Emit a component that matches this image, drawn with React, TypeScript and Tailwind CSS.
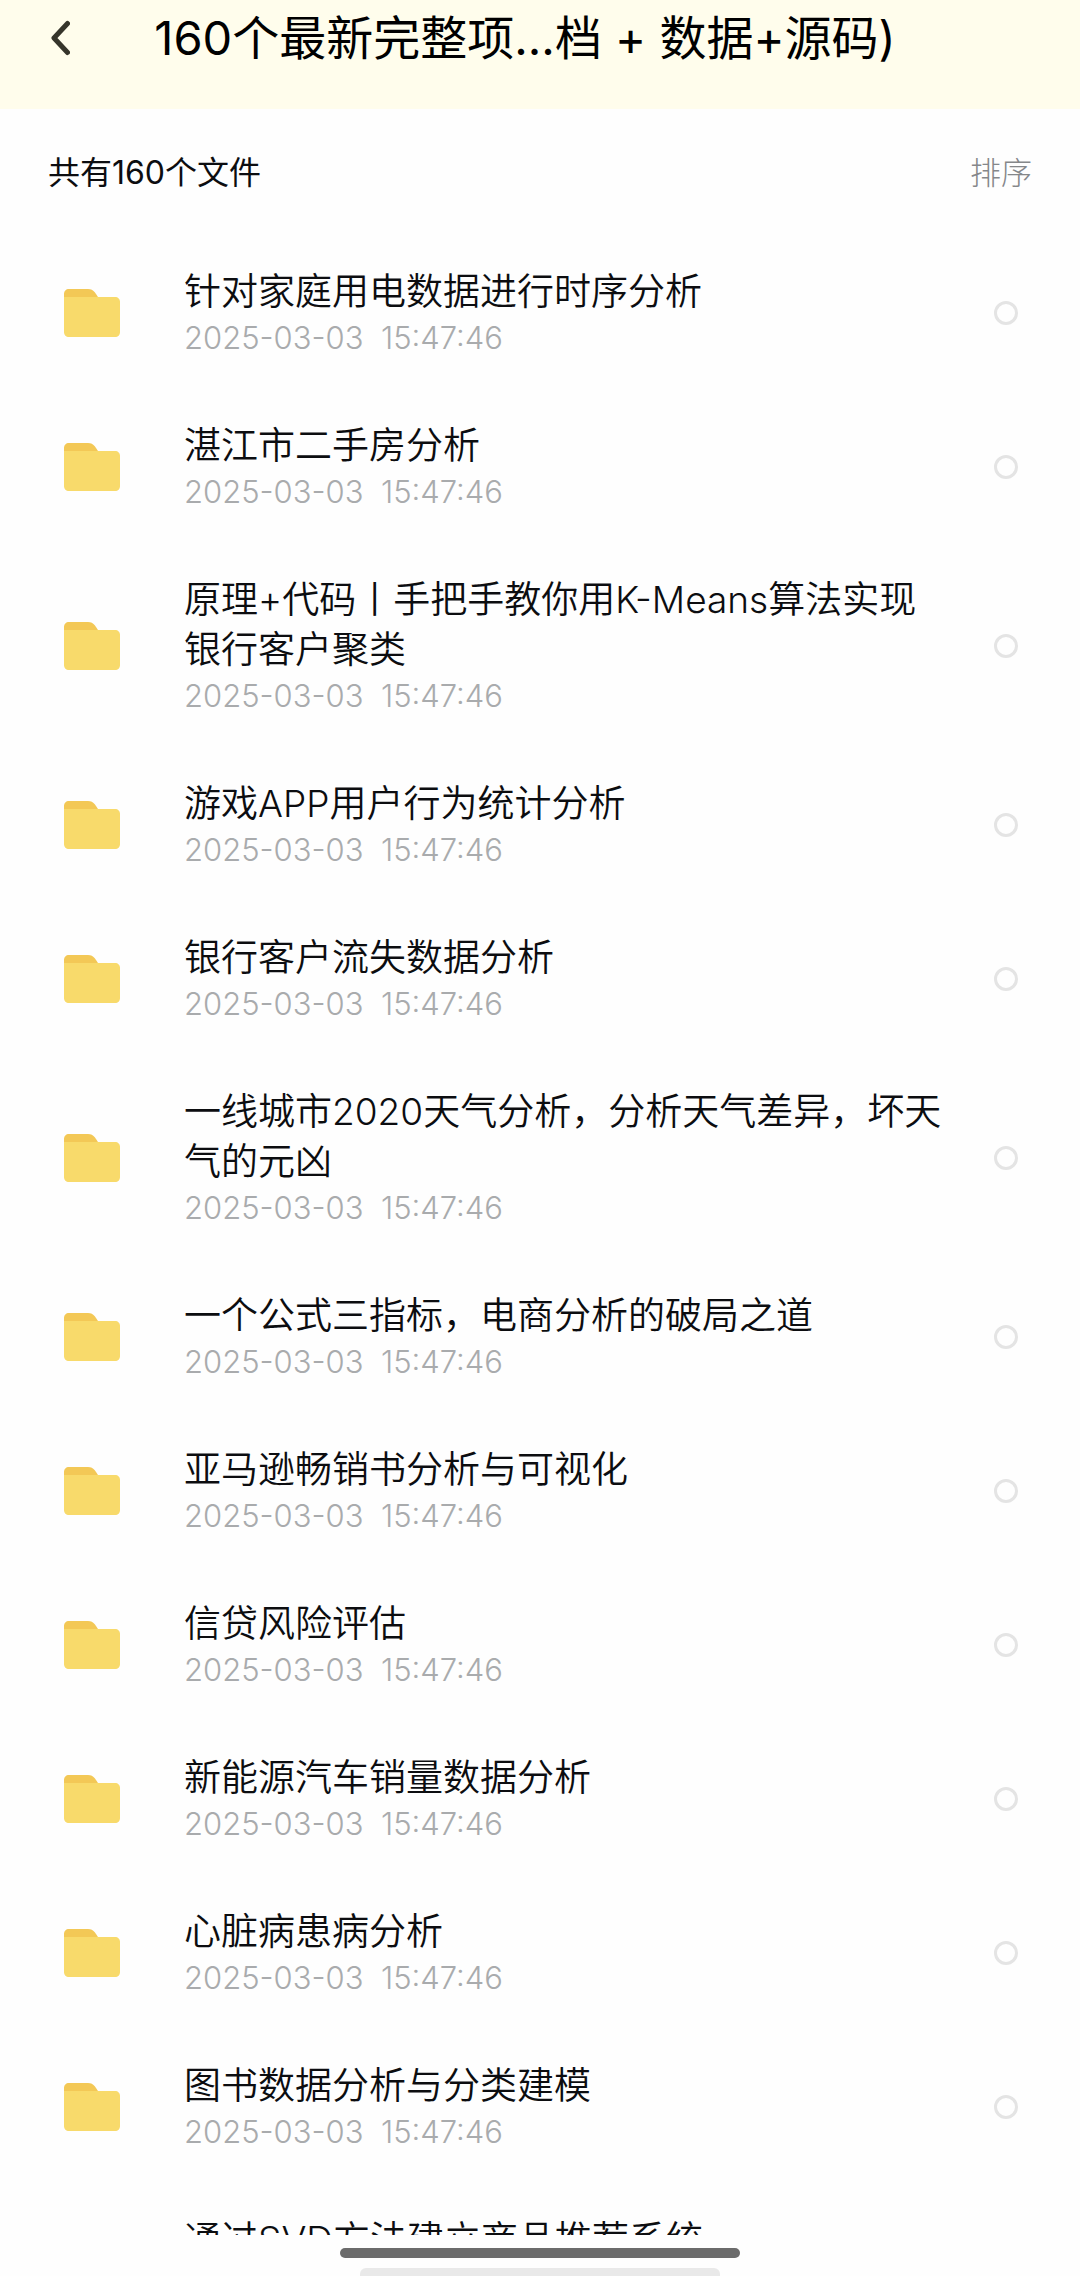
import { useState } from 'react';

interface FileItem {
  name: string;
  time: string;
}

const files: FileItem[] = [
  { name: '针对家庭用电数据进行时序分析', time: '2025-03-03  15:47:46' },
  { name: '湛江市二手房分析', time: '2025-03-03  15:47:46' },
  { name: '原理+代码丨手把手教你用K-Means算法实现银行客户聚类', time: '2025-03-03  15:47:46' },
  { name: '游戏APP用户行为统计分析', time: '2025-03-03  15:47:46' },
  { name: '银行客户流失数据分析', time: '2025-03-03  15:47:46' },
  { name: '一线城市2020天气分析，分析天气差异，坏天气的元凶', time: '2025-03-03  15:47:46' },
  { name: '一个公式三指标，电商分析的破局之道', time: '2025-03-03  15:47:46' },
  { name: '亚马逊畅销书分析与可视化', time: '2025-03-03  15:47:46' },
  { name: '信贷风险评估', time: '2025-03-03  15:47:46' },
  { name: '新能源汽车销量数据分析', time: '2025-03-03  15:47:46' },
  { name: '心脏病患病分析', time: '2025-03-03  15:47:46' },
  { name: '图书数据分析与分类建模', time: '2025-03-03  15:47:46' },
  { name: '通过SVD方法建立商品推荐系统', time: '2025-03-03  15:47:46' },
];

const BackIcon = () => (
  <svg width="20" height="36" viewBox="0 0 20 36" fill="none" aria-hidden="true">
    <path d="M17.5 3.5L4 18L17.5 32.5" stroke="#36352b" strokeWidth="5" strokeLinecap="round" strokeLinejoin="round" />
  </svg>
);

const FolderIcon = () => (
  <svg className="shrink-0" width="56" height="48" viewBox="0 0 56 48" aria-hidden="true">
    <path d="M5 0H24C27 0 29 1 31 3.5L34 8V20H0V5C0 2 2 0 5 0Z" fill="#f3c856" />
    <path d="M0 8H51C54 8 56 10 56 13V43C56 46 54 48 51 48H5C2 48 0 46 0 43Z" fill="#f8da6b" />
  </svg>
);

interface FileRowProps {
  file: FileItem;
  checked: boolean;
  onToggle: () => void;
}

const FileRow = ({ file, checked, onToggle }: FileRowProps) => (
  <li>
    <label className="flex items-center py-[31px] pl-16 pr-[62px]">
      <FolderIcon />
      <span className="ml-16 mr-12 flex min-w-0 flex-1 flex-col">
        <span className="text-[37px] font-[350] leading-[50px] text-[#0c0d10]">{file.name}</span>
        <span className="whitespace-pre text-[31px] leading-[42px] text-[#a9abad]">{file.time}</span>
      </span>
      <input
        type="checkbox"
        checked={checked}
        onChange={onToggle}
        className="size-6 shrink-0 appearance-none rounded-full border-[3px] border-[#e4e4e4] checked:border-[#f8da6b] checked:bg-[#f8da6b]"
      />
    </label>
  </li>
);

export default function App() {
  const [selected, setSelected] = useState<number[]>([]);

  const toggle = (index: number) => {
    setSelected((prev) => (prev.includes(index) ? prev.filter((i) => i !== index) : [...prev, index]));
  };

  return (
    <div className="flex h-screen flex-col bg-[#fefefe] font-['Inter','Noto_Sans_CJK_SC',sans-serif] font-light">
      {/* Header */}
      <header className="flex h-[109px] shrink-0 items-start bg-[#fffdec] pl-[50px] pr-12">
        <button type="button" aria-label="返回" className="flex h-[76px] w-12 items-center">
          <BackIcon />
        </button>
        <h1 className="flex-1 truncate text-center text-[47px] font-normal leading-[76px] text-black">
          160个最新完整项...档 + 数据+源码)
        </h1>
        <div className="w-20" />
      </header>

      {/* Count and sort */}
      <div className="flex h-[127px] shrink-0 items-center justify-between px-12 leading-[42px]">
        <p className="text-[32px] font-normal text-[#0c0d10]">共有160个文件</p>
        <button type="button" className="text-[31px] text-[#85878a]">
          排序
        </button>
      </div>

      {/* File list */}
      <main className="min-h-0 flex-1 overflow-y-auto [scrollbar-width:none]">
        <ul>
          {files.map((file, index) => (
            <FileRow
              key={file.name}
              file={file}
              checked={selected.includes(index)}
              onToggle={() => toggle(index)}
            />
          ))}
        </ul>
      </main>

      {/* Gesture bar */}
      <footer className="flex h-[41px] shrink-0 flex-col items-center justify-end gap-2.5">
        <div className="h-2.5 w-[400px] rounded-full bg-[#6b6b6b]" />
        <div className="h-2 w-[360px] rounded-t-md bg-[#e9e9e9]" />
      </footer>
    </div>
  );
}
